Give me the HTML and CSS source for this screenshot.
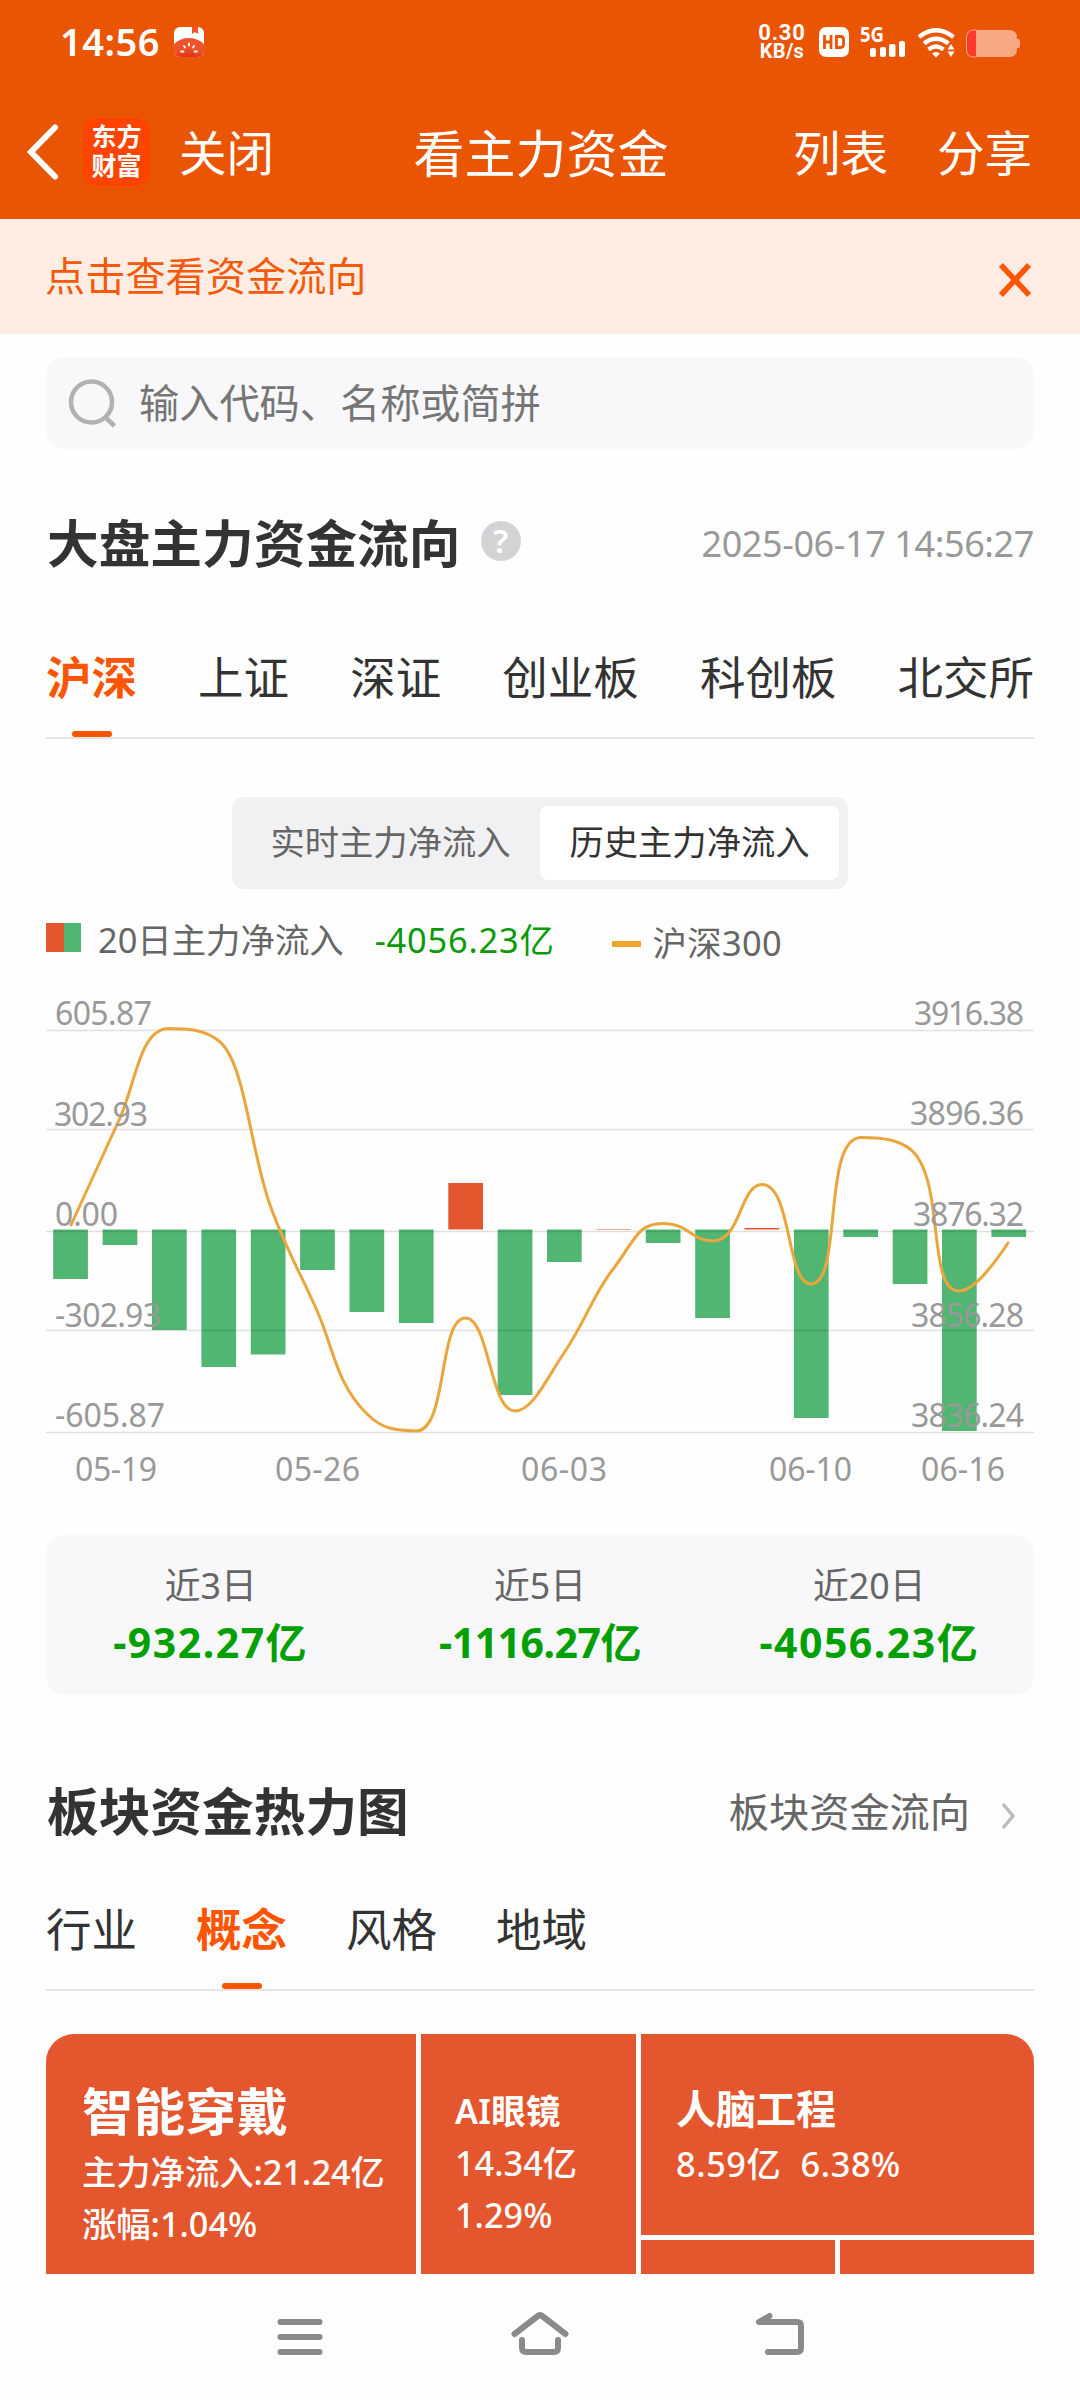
FILE: index.html
```html
<!DOCTYPE html>
<html lang="zh-CN">
<head>
    <meta charset="UTF-8">
    <meta name="viewport" content="width=device-width, initial-scale=1.0">
    <title>看主力资金</title>
    <link rel="stylesheet" href="styles.css">
</head>
<body>
    <header class="header">
        <div class="status-bar">
            <span class="clock">14:56</span>
            <svg class="app-icon" width="30" height="30" viewBox="0 0 30 30">
                <defs>
                    <radialGradient id="tomato" cx="0.5" cy="0.9" r="0.6">
                        <stop offset="0" stop-color="#d00808"/>
                        <stop offset="1" stop-color="#f0522a"/>
                    </radialGradient>
                    <clipPath id="appClip"><rect width="30" height="30" rx="6"/></clipPath>
                </defs>
                <g clip-path="url(#appClip)">
                    <rect width="30" height="30" fill="#fff"/>
                    <path d="M18 0h6v7l-3-2-3 2z" fill="#f0522a"/>
                    <ellipse cx="15" cy="27" rx="19" ry="16" fill="url(#tomato)"/>
                    <path d="M15 16.500v2M10 19l1 1.500M20 19l-1 1.500M7 24.500h2.500M20.500 24.500h2.500" stroke="#fff" stroke-width="1.800" stroke-linecap="round"/>
                </g>
            </svg>
            <div class="net-speed"><span>0.30</span><span>KB/s</span></div>
            <svg class="status-icons" width="206" height="54" viewBox="817 15 206 54">
                <rect x="819" y="27" width="30" height="30" rx="7" fill="#fff"/>
                <path d="M824.500 35v14M831 35v14M824.500 42h6.500M836.500 36.500h4q3 0 3 3v5q0 3-3 3h-4z" fill="none" stroke="#ea5504" stroke-width="2.800"/>
                <text x="860" y="42" class="signal-label" textLength="24" lengthAdjust="spacingAndGlyphs">5G</text>
                <g fill="#fff">
                    <rect x="870" y="48" width="6" height="9" rx="2"/>
                    <rect x="880" y="47" width="6" height="10" rx="2"/>
                    <rect x="889" y="44" width="6.500" height="13" rx="2"/>
                    <rect x="899" y="41" width="6" height="16" rx="2"/>
                    <path d="M932 53.500q4-3 8 0l-4 4z"/>
                    <path d="M947.500 49.500l3.500-5.500 3.500 5.500zM947.500 51.500l3.500 5.500 3.500-5.500z"/>
                </g>
                <g fill="none" stroke="#fff" stroke-width="4.200">
                    <path d="M919 37q17-13.500 34.500 0"/>
                    <path d="M924 43.500q12-9.500 24.500 0"/>
                    <path d="M928.500 49.500q7.500-6 15 0"/>
                </g>
                <path d="M974 30h35q8 0 8 8v1h1q2 0 2 2v5q0 2-2 2h-1v1q0 8-8 8h-35z" fill="#f6a983"/>
                <path d="M976.500 30v27h-2.500q-7.500 0-7.500-8v-11q0-8 7.500-8z" fill="#ff3a2c" stroke="#f6a983" stroke-width="1"/>
            </svg>
        </div>
        <nav class="title-bar">
            <div class="title-left">
                <svg width="34" height="60" viewBox="0 0 34 60">
                    <path d="M29 5.500L5 30l24 24.500" fill="none" stroke="#fff" stroke-width="6" stroke-linecap="round"/>
                </svg>
                <div class="logo"><span>东方</span><span>财富</span></div>
                <span class="bar-link">关闭</span>
            </div>
            <h1>看主力资金</h1>
            <div class="title-right">
                <span class="bar-link">列表</span>
                <span class="bar-link">分享</span>
            </div>
        </nav>
    </header>

    <div class="notice">
        <span>点击查看资金流向</span>
        <svg width="32" height="34" viewBox="0 0 32 34">
            <path d="M2 2l28 30M30 2L2 32" stroke="#ff5500" stroke-width="5.500"/>
        </svg>
    </div>

    <main>
        <div class="search">
            <svg width="50" height="52" viewBox="0 0 50 52">
                <circle cx="24.500" cy="25" r="20.500" fill="none" stroke="#b1b1b3" stroke-width="4.500"/>
                <path d="M38 40l9.500 9" stroke="#b1b1b3" stroke-width="4.500"/>
            </svg>
            <span>输入代码、名称或简拼</span>
        </div>

        <section class="market">
            <div class="section-head">
                <h2>大盘主力资金流向</h2>
                <span class="help">?</span>
                <time>2025-06-17 14:56:27</time>
            </div>

            <div class="tabs tabs-wide">
                <span class="tab active">沪深</span>
                <span class="tab">上证</span>
                <span class="tab">深证</span>
                <span class="tab">创业板</span>
                <span class="tab">科创板</span>
                <span class="tab">北交所</span>
            </div>

            <div class="segment">
                <span class="segment-item">实时主力净流入</span>
                <span class="segment-item selected">历史主力净流入</span>
            </div>

            <div class="legend">
                <i class="swatch"></i>
                <span class="legend-name">20日主力净流入</span>
                <span class="legend-value">-4056.23亿</span>
                <i class="dash"></i>
                <span class="legend-index">沪深300</span>
            </div>

            <svg class="chart" width="988" height="510" viewBox="46 990 988 510">
                <g fill="#50b671">
                    <rect x="53.200" y="1229.500" width="34.700" height="49.500"/>
                    <rect x="102.600" y="1229.500" width="34.700" height="15.500"/>
                    <rect x="152" y="1229.500" width="34.700" height="100.500"/>
                    <rect x="201.400" y="1229.500" width="34.700" height="137.500"/>
                    <rect x="250.800" y="1229.500" width="34.700" height="125"/>
                    <rect x="300.100" y="1229.500" width="34.700" height="40.500"/>
                    <rect x="349.500" y="1229.500" width="34.700" height="82.500"/>
                    <rect x="398.900" y="1229.500" width="34.700" height="93.500"/>
                    <rect x="497.700" y="1229.500" width="34.700" height="165.500"/>
                    <rect x="547" y="1229.500" width="34.700" height="32.500"/>
                    <rect x="645.800" y="1229.500" width="34.700" height="13.500"/>
                    <rect x="695.200" y="1229.500" width="34.700" height="88.500"/>
                    <rect x="793.900" y="1229.500" width="34.700" height="188.500"/>
                    <rect x="843.300" y="1229.500" width="34.700" height="7.500"/>
                    <rect x="892.700" y="1229.500" width="34.700" height="54.500"/>
                    <rect x="942" y="1229.500" width="34.700" height="201.500"/>
                    <rect x="991.400" y="1229.500" width="34.700" height="7.500"/>
                </g>
                <g fill="#e4572e">
                    <rect x="448.300" y="1183" width="34.700" height="46.500"/>
                    <rect x="596.400" y="1229" width="34.700" height="0.500"/>
                    <rect x="744.500" y="1228" width="34.700" height="1.500"/>
                </g>
                <g class="grid">
                    <path d="M46 1030.500H1034M46 1129.500H1034M46 1231.500H1034M46 1330.500H1034M46 1432.500H1034"/>
                </g>
                <path class="index-line" d="M71 1225C87 1190 104 1153 120 1118
                    C136 1082 140 1028.500 169 1028.500C186 1028.500 204 1029 219 1041
                    C244 1061 249 1140 268 1199C282 1242 303 1278 318 1313
                    C334 1350 336 1383 367 1414C383 1430 397 1430.500 416 1431
                    C448 1431 438 1318 465.500 1318C489 1318 490 1411 515 1411
                    C533 1411 548 1376 564 1353C585 1322 595 1291 614 1268
                    C636 1238 638 1223.500 663 1223.500C689 1223.500 691 1241 713 1241
                    C741 1241 740 1184.500 762 1184.500C792 1184.500 786 1284 811 1284
                    C843 1284 822 1137.500 861 1137.500C880 1137.500 897 1139 910 1149
                    C946 1177 926 1291 959 1291C975 1291 996 1261 1008 1243"/>
                <g class="axis">
                    <text x="55" y="1025" textLength="97">605.87</text>
                    <text x="54" y="1126" textLength="94">302.93</text>
                    <text x="55" y="1226" textLength="63">0.00</text>
                    <text x="55" y="1327" textLength="106">-302.93</text>
                    <text x="55" y="1427" textLength="110">-605.87</text>
                </g>
                <g class="axis">
                    <text x="914" y="1025" textLength="110">3916.38</text>
                    <text x="910" y="1125" textLength="114">3896.36</text>
                    <text x="913" y="1226" textLength="111">3876.32</text>
                    <text x="911" y="1327" textLength="113">3856.28</text>
                    <text x="911" y="1427" textLength="113">3836.24</text>
                </g>
                <g class="axis">
                    <text x="75" y="1481" textLength="82">05-19</text>
                    <text x="275" y="1481" textLength="85">05-26</text>
                    <text x="521" y="1481" textLength="86">06-03</text>
                    <text x="769" y="1481" textLength="83">06-10</text>
                    <text x="921" y="1481" textLength="84">06-16</text>
                </g>
            </svg>

            <div class="summary">
                <div class="summary-item">
                    <span class="summary-label">近3日</span>
                    <span class="summary-value">-932.27亿</span>
                </div>
                <div class="summary-item">
                    <span class="summary-label">近5日</span>
                    <span class="summary-value tight">-1116.27亿</span>
                </div>
                <div class="summary-item">
                    <span class="summary-label">近20日</span>
                    <span class="summary-value">-4056.23亿</span>
                </div>
            </div>
        </section>

        <section class="sector">
            <div class="section-head">
                <h2>板块资金热力图</h2>
                <span class="more">板块资金流向</span>
                <svg class="more-arrow" width="15" height="28" viewBox="0 0 15 28">
                    <path d="M2 2l10 12L2 26" fill="none" stroke="#bdbdbf" stroke-width="3.500"/>
                </svg>
            </div>

            <div class="tabs">
                <span class="tab">行业</span>
                <span class="tab active">概念</span>
                <span class="tab">风格</span>
                <span class="tab">地域</span>
            </div>

            <div class="heatmap">
                <div class="tile tile-large">
                    <strong>智能穿戴</strong>
                    <span>主力净流入:21.24亿</span>
                    <span>涨幅:1.04%</span>
                </div>
                <div class="tile tile-medium">
                    <strong>AI眼镜</strong>
                    <span>14.34亿</span>
                    <span>1.29%</span>
                </div>
                <div class="tile tile-wide">
                    <strong>人脑工程</strong>
                    <span>8.59亿&nbsp; 6.38%</span>
                </div>
                <div class="tile"></div>
                <div class="tile"></div>
            </div>
        </section>
    </main>

    <footer class="nav-keys">
        <svg width="60" height="60" viewBox="270 2307 60 60">
            <path d="M280.500 2322h39M280.500 2337h39M280.500 2352h39"/>
        </svg>
        <svg width="60" height="60" viewBox="510 2307 60 60">
            <path d="M514.500 2334L538.500 2315.500q1.500-1 3 0L565.500 2334M522 2340v8q0 4 4 4h28q4 0 4-4v-8"/>
        </svg>
        <svg width="60" height="60" viewBox="750 2307 60 60">
            <path d="M769.500 2316L759 2322h38q4 0 4 4v22q0 4-4 4h-29"/>
        </svg>
    </footer>
</body>
</html>
```
FILE: styles.css
```css
* {
    box-sizing: border-box;
}

body {
    margin: 0;
    width: 1080px;
    height: 2400px;
    overflow: hidden;
    display: flex;
    flex-direction: column;
    background-color: #fefefe;
    color: #333;
    font-family: "Noto Sans", "Noto Sans CJK SC", sans-serif;
}

svg {
    display: block;
    flex-shrink: 0;
}

h1, h2 {
    margin: 0;
}

/* header */
.header {
    height: 219px;
    background-color: #ea5504;
    color: #fff;
}

.status-bar {
    height: 84px;
    padding: 0 57px 0 60px;
    display: flex;
    align-items: center;
}

.clock {
    width: 114px;
    font-size: 38px;
    font-weight: 600;
    line-height: 40px;
    letter-spacing: 0.5px;
    margin-top: -2px;
}

.net-speed {
    margin-left: auto;
    margin-right: 9px;
    width: 52px;
    display: flex;
    flex-direction: column;
    align-items: center;
    font-family: Roboto, sans-serif;
    font-size: 22px;
    font-weight: 700;
    line-height: 18px;
    letter-spacing: 0.800px;
}

.net-speed span:last-child {
    font-size: 20px;
    letter-spacing: 0.300px;
}

.signal-label {
    fill: #fff;
    font-size: 21px;
    font-weight: 700;
}

.title-bar {
    height: 135px;
    padding: 0 48px 0 26px;
    display: grid;
    grid-template-columns: 1fr auto 1fr;
    align-items: center;
}

.title-left,
.title-right {
    display: flex;
    align-items: center;
}

.title-left {
    height: 70px;
}

.title-right {
    justify-content: flex-end;
    gap: 49px;
}

.title-bar h1 {
    margin: 0 -12px 0 12px;
    font-size: 51px;
    font-weight: 400;
    line-height: 60px;
}

.bar-link {
    font-size: 47.500px;
    line-height: 60px;
}

.title-bar h1,
.bar-link {
    padding-top: 2px;
}

.logo {
    width: 67px;
    height: 68px;
    margin: 0 29px 0 23px;
    border-radius: 14px;
    background-color: #ff4400;
    display: flex;
    flex-direction: column;
    align-items: center;
    justify-content: center;
    font-family: "Noto Sans CJK SC", sans-serif;
    font-size: 25px;
    font-weight: 700;
    line-height: 29px;
    padding-bottom: 3px;
}

/* notice */
.notice {
    height: 115px;
    padding: 0 49px 0 45px;
    display: flex;
    align-items: center;
    justify-content: space-between;
    background-color: #ffede4;
    color: #f5590a;
    font-size: 40.200px;
    line-height: 60px;
}

.notice span {
    margin-top: -2px;
}

.notice svg {
    margin-top: 6px;
}

main {
    padding: 23px 46px 0;
}

.search {
    height: 92px;
    padding-left: 21px;
    display: flex;
    align-items: center;
    gap: 22px;
    border-radius: 18px;
    background-color: #f8f8fa;
    color: #757575;
    font-size: 40.200px;
    line-height: 60px;
}

.section-head {
    display: flex;
    align-items: center;
}

h2 {
    margin-left: 1px;
    font-size: 51.700px;
    font-weight: 700;
    line-height: 66px;
}

.market .section-head {
    margin-top: 61px;
}

.help {
    width: 40px;
    height: 40px;
    margin: -5px 0 0 20px;
    border-radius: 50%;
    background-color: #d3d3d5;
    color: #fff;
    font-size: 33px;
    font-weight: 600;
    line-height: 40px;
    text-align: center;
}

time {
    margin-left: auto;
    color: #999;
    font-size: 36px;
    letter-spacing: -0.400px;
}

/* tabs */
.tabs {
    display: flex;
    gap: 59px;
    height: 93px;
    border-bottom: 2px solid #e5e5e6;
    font-size: 45.500px;
    line-height: 63px;
}

.tabs-wide {
    justify-content: space-between;
    gap: 0;
    margin-top: 70px;
}

.tab {
    display: flex;
    flex-direction: column;
    align-items: center;
    justify-content: space-between;
}

.tab.active {
    color: #ff5500;
    font-weight: 700;
}

.tab.active::after {
    content: "";
    width: 40px;
    height: 6px;
    border-radius: 3px;
    background-color: #ff5500;
}

.segment {
    width: 616px;
    height: 92px;
    margin: 58px auto 0;
    padding: 9px;
    display: flex;
    border-radius: 12px;
    background-color: #f1f1f4;
    color: #666;
    font-size: 34.300px;
    line-height: 72px;
}

.segment-item {
    flex: 1;
    border-radius: 8px;
    text-align: center;
}

.segment-item.selected {
    background-color: #fff;
    color: #333;
}

/* legend */
.legend {
    height: 60px;
    margin-top: 21px;
    display: flex;
    align-items: center;
    color: #666;
    font-size: 34.400px;
    line-height: 60px;
}

.swatch {
    width: 35px;
    height: 29px;
    margin-bottom: 5px;
    background: linear-gradient(to right, #e4572e 50%, #50b671 50%);
}

.legend-name {
    margin-left: 17px;
}

.legend-value {
    margin-left: 31px;
    color: #099a09;
    letter-spacing: 0.800px;
}

.dash {
    width: 29px;
    height: 6px;
    margin: 8px 12px 0 57px;
    background-color: #f2a32e;
}

.legend-index {
    margin-top: 6px;
    letter-spacing: 0.300px;
}

/* chart */
.chart {
    margin-top: 20px;
    overflow: visible;
}

.grid path {
    stroke: #000;
    stroke-opacity: 0.120;
    stroke-width: 1.300;
}

.index-line {
    fill: none;
    stroke: #eaa63c;
    stroke-width: 3;
    stroke-linecap: round;
}

.axis text {
    fill: #999;
    font-size: 32px;
}

.summary {
    height: 160px;
    margin-top: 35px;
    padding-top: 20px;
    display: grid;
    grid-template-columns: repeat(3, 1fr);
    border-radius: 18px;
    background-color: #f8f8fa;
}

.summary-item {
    display: flex;
    flex-direction: column;
    align-items: center;
}

.summary-label {
    color: #666;
    font-size: 35.800px;
    line-height: 60px;
}

.summary-value {
    color: #00a000;
    font-size: 41px;
    font-weight: 700;
    line-height: 54px;
    letter-spacing: 1.500px;
}

.summary-value.tight {
    letter-spacing: -0.500px;
}

/* sector heat map */
.sector .section-head {
    margin-top: 83px;
}

.more {
    margin: -4px 0 0 auto;
    color: #666;
    font-size: 40.200px;
}

.more-arrow {
    margin: 9px 18px 0 31px;
}

.sector .tabs {
    margin-top: 54px;
}

.heatmap {
    height: 240px;
    margin-top: 43px;
    display: grid;
    grid-template-columns: 370px 215px 1fr 1fr;
    grid-template-rows: 201px 34px;
    gap: 5px;
    border-radius: 28px 28px 0 0;
    overflow: hidden;
}

.tile {
    display: flex;
    flex-direction: column;
    background-color: #e4572e;
    color: #fff;
    font-size: 34.300px;
    font-weight: 500;
    line-height: 52px;
}

.tile strong {
    font-weight: 600;
}

.tile-large {
    grid-row: span 2;
    padding: 43px 0 0 36px;
}

.tile-large strong {
    font-size: 51.500px;
    line-height: 69px;
}

.tile-medium {
    grid-row: span 2;
    padding: 51px 0 0 34px;
}

.tile-medium strong {
    letter-spacing: 0.300px;
}

.tile-wide {
    grid-column: span 2;
    padding: 46px 0 0 35px;
}

.tile-wide strong {
    font-size: 40px;
    line-height: 58px;
}

.tile-wide span {
    letter-spacing: 0.600px;
}

/* system keys */
.nav-keys {
    height: 126px;
    margin-top: auto;
    display: flex;
    justify-content: center;
    align-items: center;
    gap: 180px;
}

.nav-keys path {
    fill: none;
    stroke: #8a8a8a;
    stroke-width: 6;
    stroke-linecap: round;
    stroke-linejoin: round;
}
```
